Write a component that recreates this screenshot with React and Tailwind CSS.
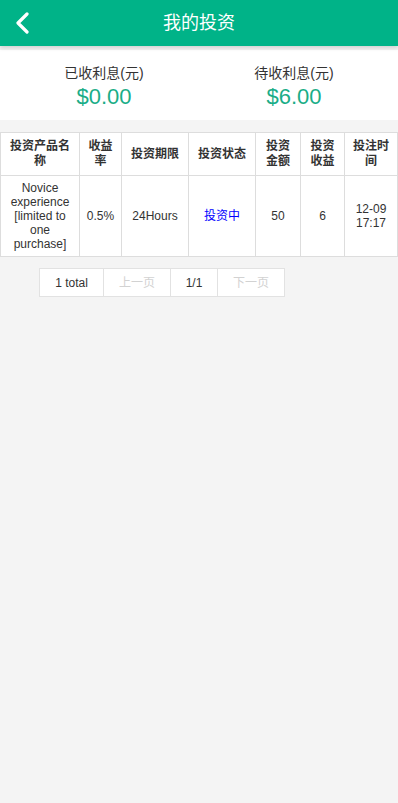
export default function App() {
    const font = { fontFamily: '"Liberation Sans", Arial, "Noto Sans CJK SC", sans-serif' };
    const th = "border border-[#dddddd] px-[7px] py-[5px] font-bold text-[12px] leading-[15px] text-[#333] text-center";
    const td = "border border-[#dddddd] px-[6px] py-[4px] text-[12px] leading-[14px] text-[#333] text-center";

    return (
        <div className="min-h-[803px] bg-[#f4f4f4]" style={font}>

            {/* Header */}
            <div className="relative h-[46px] bg-[#00b388] flex items-center justify-center shadow-[0_2px_4px_rgba(0,0,0,0.15)]">
                <svg className="absolute left-[15px] top-[12px]" width="16" height="22" viewBox="0 0 16 22">
                    <path d="M12 2 L3 11 L12 20" fill="none" stroke="#fff" strokeWidth="3.2" strokeLinecap="round" strokeLinejoin="round" />
                </svg>
                <h1 className="text-white text-[18px]">我的投资</h1>
            </div>

            {/* Stats */}
            <div className="mt-[4px] bg-white grid grid-cols-2 px-[9px] h-[70px] pt-[14px]">
                <div className="flex flex-col items-center">
                    <p className="text-[14px] leading-[18px] text-[#333]">已收利息(元)</p>
                    <p className="mt-[2px] text-[22px] leading-[26px] text-[#1aad87]">$0.00</p>
                </div>
                <div className="flex flex-col items-center">
                    <p className="text-[14px] leading-[18px] text-[#333]">待收利息(元)</p>
                    <p className="mt-[2px] text-[22px] leading-[26px] text-[#1aad87]">$6.00</p>
                </div>
            </div>

            {/* Table */}
            <div className="mt-[12px] bg-white">
                <table className="w-full border-collapse table-fixed">
                    <colgroup>
                        <col className="w-[79px]" />
                        <col className="w-[42px]" />
                        <col className="w-[67px]" />
                        <col className="w-[67px]" />
                        <col className="w-[45px]" />
                        <col className="w-[44px]" />
                        <col />
                    </colgroup>
                    <thead>
                        <tr className="h-[43px]">
                            <th className={th}>投资产品名称</th>
                            <th className={th}>收益率</th>
                            <th className={th}>投资期限</th>
                            <th className={th}>投资状态</th>
                            <th className={th}>投资金额</th>
                            <th className={th}>投资收益</th>
                            <th className={th}>投注时间</th>
                        </tr>
                    </thead>
                    <tbody>
                        <tr className="h-[81px]">
                            <td className={td}>Novice experience [limited to one purchase]</td>
                            <td className={td}>0.5%</td>
                            <td className={td}>24Hours</td>
                            <td className={`${td} !text-[#0000ff]`}>投资中</td>
                            <td className={td}>50</td>
                            <td className={td}>6</td>
                            <td className={td}>12-09 17:17</td>
                        </tr>
                    </tbody>
                </table>
            </div>

            {/* Pagination */}
            <div className="mt-[11px] ml-[39px] flex w-fit bg-white border border-[#e2e2e2] h-[29px] text-[12px]">
                <span className="w-[64px] flex items-center justify-center text-[#333] border-r border-[#e2e2e2]">1 total</span>
                <span className="w-[67px] flex items-center justify-center text-[#d2d2d2] border-r border-[#e2e2e2]">上一页</span>
                <span className="w-[47px] flex items-center justify-center text-[#333] border-r border-[#e2e2e2]">1/1</span>
                <span className="w-[66px] flex items-center justify-center text-[#d2d2d2]">下一页</span>
            </div>
        </div>
    );
}
